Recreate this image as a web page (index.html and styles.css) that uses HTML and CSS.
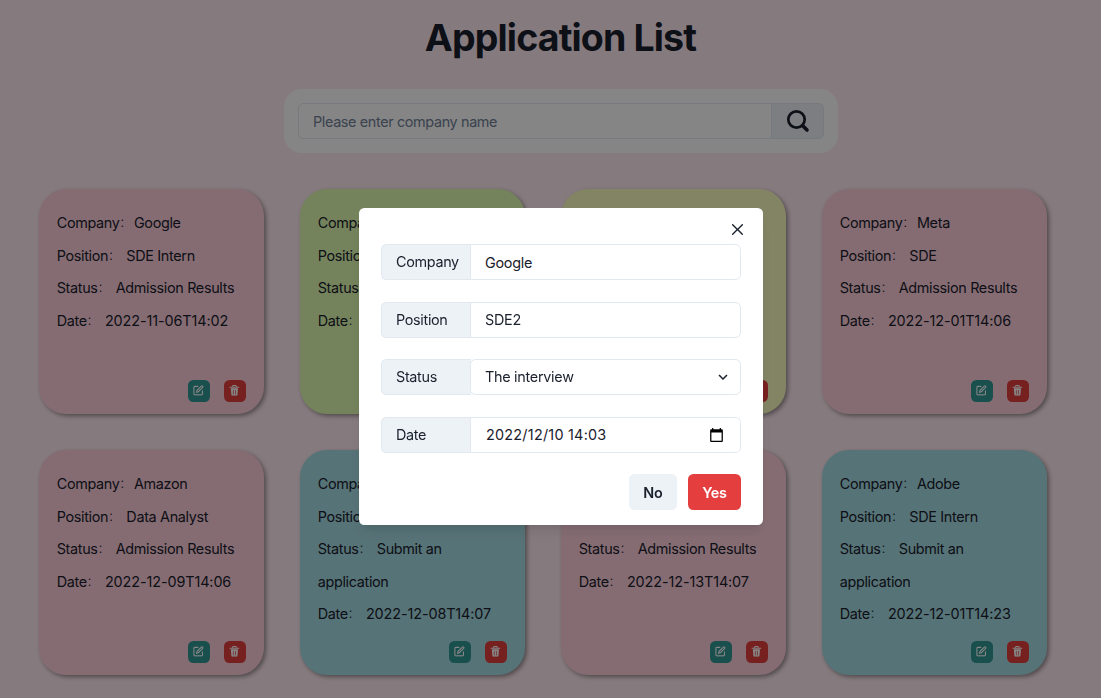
FILE: index.html
```html
<!DOCTYPE html>
<html lang="en">
<head>
<meta charset="utf-8">
<title>Application List</title>
<link rel="stylesheet" href="styles.css">
</head>
<body>
<svg class="sprite" aria-hidden="true">
  <symbol id="edit" viewBox="0 0 24 24"><g fill="none" stroke="currentColor" stroke-linecap="round" stroke-width="2.4"><path d="M11 3H4a2 2 0 0 0-2 2v15a2 2 0 0 0 2 2h15a2 2 0 0 0 2-2v-7"/><path d="M18.5 2.5a2.12 2.12 0 0 1 3 3L12 15l-4 1 1-4Z"/></g></symbol>
  <symbol id="trash" viewBox="0 0 24 24"><path fill="currentColor" d="M19.452 7.5H4.547a.5.5 0 0 0-.5.545l1.287 14.136A2 2 0 0 0 7.326 24h9.347a2 2 0 0 0 1.992-1.819L19.95 8.045a.5.5 0 0 0-.498-.545Zm-9.2 13a.75.75 0 0 1-1.5 0v-9a.75.75 0 0 1 1.5 0Zm5 0a.75.75 0 0 1-1.5 0v-9a.75.75 0 0 1 1.5 0ZM22 4h-4.75a.25.25 0 0 1-.25-.25V2.5A2.5 2.5 0 0 0 14.5 0h-5A2.5 2.5 0 0 0 7 2.5v1.25a.25.25 0 0 1-.25.25H2a1 1 0 0 0 0 2h20a1 1 0 0 0 0-2ZM9 3.75V2.5a.5.5 0 0 1 .5-.5h5a.5.5 0 0 1 .5.5v1.25a.25.25 0 0 1-.25.25h-5.5A.25.25 0 0 1 9 3.75Z"/></symbol>
</svg>
<main class="page">
  <h1 class="title">Application List</h1>
  <div class="search">
    <div class="search-input">Please enter company name</div>
    <div class="search-btn"><svg viewBox="0 0 22 22"><g fill="none" stroke="currentColor" stroke-linecap="round"><circle cx="9.500" cy="9.500" r="8.200" stroke-width="2.700"/><path d="m16 16 4 4" stroke-width="3.600"/></g></svg></div>
  </div>
  <div class="cards">
    <article class="card pink"><p>Company<i>:</i>Google</p><p>Position<i>:</i> SDE Intern</p><p>Status<i>:</i> Admission Results</p><p>Date<i>:</i> <time>2022-11-06T14:02</time></p><div class="actions"><span class="act edit"><svg><use href="#edit"/></svg></span><span class="act del"><svg><use href="#trash"/></svg></span></div></article>
    <article class="card green"><p>Company<i>:</i></p><p>Position<i>:</i></p><p>Status<i>:</i></p><p>Date<i>:</i></p><div class="actions"><span class="act edit"><svg><use href="#edit"/></svg></span><span class="act del"><svg><use href="#trash"/></svg></span></div></article>
    <article class="card yellow"><div class="actions"><span class="act edit"><svg><use href="#edit"/></svg></span><span class="act del"><svg><use href="#trash"/></svg></span></div></article>
    <article class="card pink"><p>Company<i>:</i>Meta</p><p>Position<i>:</i> SDE</p><p>Status<i>:</i> Admission Results</p><p>Date<i>:</i> <time>2022-12-01T14:06</time></p><div class="actions"><span class="act edit"><svg><use href="#edit"/></svg></span><span class="act del"><svg><use href="#trash"/></svg></span></div></article>
    <article class="card pink"><p>Company<i>:</i>Amazon</p><p>Position<i>:</i> Data Analyst</p><p>Status<i>:</i> Admission Results</p><p>Date<i>:</i> <time>2022-12-09T14:06</time></p><div class="actions"><span class="act edit"><svg><use href="#edit"/></svg></span><span class="act del"><svg><use href="#trash"/></svg></span></div></article>
    <article class="card blue"><p>Company<i>:</i></p><p>Position<i>:</i></p><p>Status<i>:</i> Submit an application</p><p>Date<i>:</i> <time>2022-12-08T14:07</time></p><div class="actions"><span class="act edit"><svg><use href="#edit"/></svg></span><span class="act del"><svg><use href="#trash"/></svg></span></div></article>
    <article class="card pink"><p>Company<i>:</i></p><p>Position<i>:</i></p><p>Status<i>:</i> Admission Results</p><p>Date<i>:</i> <time>2022-12-13T14:07</time></p><div class="actions"><span class="act edit"><svg><use href="#edit"/></svg></span><span class="act del"><svg><use href="#trash"/></svg></span></div></article>
    <article class="card blue"><p>Company<i>:</i>Adobe</p><p>Position<i>:</i> SDE Intern</p><p>Status<i>:</i> Submit an application</p><p>Date<i>:</i> <time>2022-12-01T14:23</time></p><div class="actions"><span class="act edit"><svg><use href="#edit"/></svg></span><span class="act del"><svg><use href="#trash"/></svg></span></div></article>
  </div>
</main>
<div class="overlay">
  <section class="modal" role="dialog">
    <svg class="close" viewBox="0 0 24 24"><path fill="currentColor" d="M.439 21.44a1.5 1.5 0 0 0 2.122 2.121l9.262-9.261a.25.25 0 0 1 .354 0l9.262 9.263a1.5 1.5 0 1 0 2.122-2.121L14.3 12.177a.25.25 0 0 1 0-.354l9.263-9.262A1.5 1.5 0 0 0 21.439.44L12.177 9.7a.25.25 0 0 1-.354 0L2.561.44A1.5 1.5 0 0 0 .439 2.561L9.7 11.823a.25.25 0 0 1 0 .354Z"/></svg>
    <div class="row"><label class="addon">Company</label><div class="field typed">Google</div></div>
    <div class="row"><label class="addon">Position</label><div class="field">SDE2</div></div>
    <div class="row"><label class="addon">Status</label><div class="field select">The interview<svg class="chev" viewBox="0 0 24 24"><path fill="currentColor" d="M16.59 8.59 12 13.17 7.41 8.59 6 10l6 6 6-6z"/></svg></div></div>
    <div class="row"><label class="addon">Date</label><div class="field date">2022/12/10 14:03<svg class="cal" viewBox="2 1 20 22"><path fill="#000" d="M20 3h-1V1h-2v2H7V1H5v2H4c-1.100 0-2 .9-2 2v16c0 1.100.9 2 2 2h16c1.100 0 2-.9 2-2V5c0-1.100-.9-2-2-2zm0 18H4V8h16v13z"/></svg></div></div>
    <footer class="buttons"><button class="btn no">No</button><button class="btn yes">Yes</button></footer>
  </section>
</div>
</body>
</html>
```
FILE: styles.css
```css
* { box-sizing: border-box; margin: 0; }
body { height: 698px; overflow: hidden; background: #ffebf1; color: #1a202c; font: 14.4px/21.6px Inter, "Noto Sans CJK SC", sans-serif; letter-spacing: -.33px; }
.sprite { display: none; }
.page { display: flex; flex-direction: column; align-items: center; width: 1122px; height: 698px; overflow: hidden; padding-top: 14px; }
.title { margin-left: -1px; font-size: 37.5px; line-height: 48px; font-weight: 700; letter-spacing: -.86px; }
.search { display: flex; flex: none; width: 554px; height: 64px; margin-top: 27px; padding: 14px; border-radius: 18px; background: #fff; }
.search-input { flex: 1; padding: 0 14px; border: 1px solid #e2e8f0; border-radius: 5.4px 0 0 5.4px; line-height: 36px; color: #718096; letter-spacing: -.36px; }
.search-btn { display: flex; align-items: center; justify-content: center; width: 53px; margin-left: -1px; border: 1px solid #e2e8f0; border-radius: 0 5.4px 5.4px 0; background: #edf2f7; }
.search-btn svg { width: 22px; height: 22px; overflow: visible; }
.cards { display: grid; flex: none; grid-template-columns: repeat(4, 225px); grid-auto-rows: 225px; gap: 36px; margin: 36px 0 0 -35.600px; }
.card { display: flex; flex-direction: column; padding: 18px 17.500px 12.500px; border-radius: 27px; box-shadow: 2px 2px 4px rgba(0, 0, 0, .4); line-height: 32.600px; }
.card i { display: inline-block; width: 14.4px; padding-left: 1px; vertical-align: 1px; font: 300 14.4px/20px "Noto Sans CJK SC", sans-serif; }
.card time { letter-spacing: -.1px; }
.pink { background: #ffd0dd; }
.green { background: #dffcb1; }
.yellow { background: #fcfdc0; }
.blue { background: #a6dde4; }
.actions { display: flex; justify-content: flex-end; gap: 14px; margin-top: auto; padding-right: 1px; }
.act { display: flex; align-items: center; justify-content: center; width: 22px; height: 22px; border-radius: 5.4px; color: #fff; }
.act svg { width: 10.800px; height: 10.800px; }
.edit { background: #319795; }
.del { background: #e53e3e; }
.overlay { position: fixed; inset: 0 -21px 0 0; display: flex; flex-direction: column; align-items: center; padding-top: 208px; background: rgba(0, 0, 0, .48); }
.modal { position: relative; display: flex; flex-direction: column; gap: 21.600px; width: 404px; height: 317px; padding: 36px 22px 0; border-radius: 5.4px; background: #fff; box-shadow: 0 9px 14px -3px rgba(0, 0, 0, .1), 0 4px 6px -2px rgba(0, 0, 0, .05); }
.close { position: absolute; top: 16px; right: 20px; width: 11px; height: 11px; }
.row { display: flex; flex: none; height: 36px; }
.addon { width: 90px; padding-left: 14px; border: 1px solid #e2e8f0; border-right: 0; border-radius: 5.4px 0 0 5.4px; background: #edf2f7; line-height: 34px; }
.field { position: relative; flex: 1; padding-left: 14px; margin-left: -1px; border: 1px solid #e2e8f0; border-radius: 0 5.4px 5.4px 0; background: #fff; line-height: 34px; letter-spacing: -.28px; }
.typed { padding-top: 1px; }
.select { border-radius: 5.4px; }
.date { letter-spacing: .24px; padding-left: 15px; }
.chev { position: absolute; right: 8px; top: 8px; width: 18px; height: 18px; }
.cal { position: absolute; right: 17px; top: 10px; width: 13px; height: 14px; }
.buttons { display: flex; justify-content: flex-end; gap: 11px; }
.btn { height: 36px; padding: 1px 0 0; border: 0; border-radius: 5.4px; font: 600 14.4px/36px Inter, sans-serif; color: #1a202c; letter-spacing: -.2px; }
.no { width: 48px; background: #edf2f7; }
.yes { width: 53px; background: #e53e3e; color: #fff; }
```
